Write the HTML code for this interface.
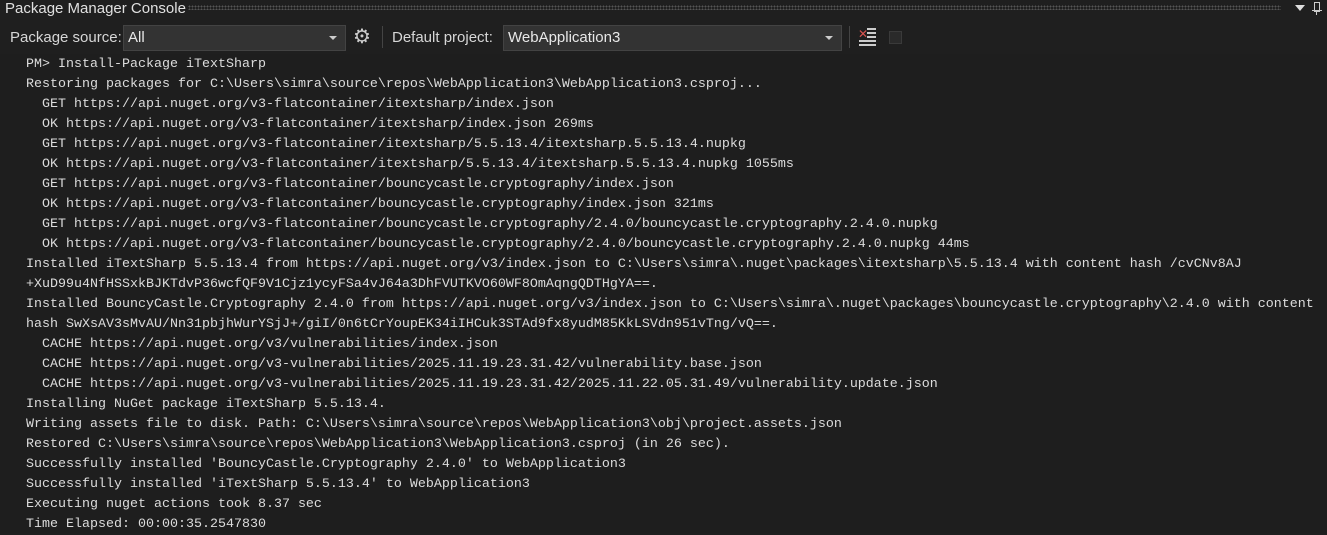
<!DOCTYPE html>
<html><head><style>
body{margin:0;width:1327px;height:533px;background:#1f1f1f;overflow:hidden;font-family:"Liberation Sans",sans-serif;color:#d6d6d6}
.title{position:absolute;left:0;top:0;width:1327px;height:20px}
.title span{position:absolute;left:5px;top:0px;font-size:15px;color:#e0e0e0}
.dots{position:absolute;left:188px;right:46px;top:5px;height:5px;background-image:radial-gradient(#555 0.8px,transparent 1px);background-size:3px 3px}
.tb{position:absolute;top:25px;height:26px;font-size:15px;line-height:26px}
.combo{position:absolute;top:25px;height:24px;background:#333333;border:1px solid #434343;font-size:15px;line-height:24px;padding-left:4px;color:#e8e8e8;box-sizing:content-box}
.arr{position:absolute;right:8px;top:10px;width:0;height:0;border-left:4px solid transparent;border-right:4px solid transparent;border-top:4px solid #ccc}
.console{position:absolute;left:0;top:54px;width:1327px;height:479px;background:#1e1e1e}
pre{margin:0;position:absolute;left:26px;top:1px;font-family:"Liberation Mono",monospace;font-size:13.33px;line-height:20px;color:#dcdcdc}
</style></head><body>
<div class="title"><span>Package Manager Console</span><div class="dots"></div>
<div style="position:absolute;left:1295px;top:5px;border-left:5px solid transparent;border-right:5px solid transparent;border-top:6px solid #ddd"></div>
<div style="position:absolute;left:1314px;top:2px;width:4px;height:8px;border:1px solid #ccc"></div>
<div style="position:absolute;left:1312px;top:10px;width:10px;height:1px;background:#ccc"></div>
<div style="position:absolute;left:1316px;top:11px;width:1px;height:4px;background:#ccc"></div>
</div>
<div class="tb" style="left:10px">Package source:</div>
<div class="combo" style="left:123px;width:217px">All<div class="arr"></div></div>
<div class="tb" style="left:353px;top:24px;font-size:20px;color:#ccc">⚙</div>
<div style="position:absolute;left:382px;top:26px;width:1px;height:22px;background:#444"></div>
<div class="tb" style="left:392px">Default project:</div>
<div class="combo" style="left:503px;width:333px">WebApplication3<div class="arr"></div></div>
<div style="position:absolute;left:849px;top:26px;width:1px;height:22px;background:#444"></div>
<div style="position:absolute;left:858px;top:28px;color:#d9534f;font-size:12px;line-height:12px">✕</div>
<div style="position:absolute;left:867px;top:28px;width:9px;height:2px;background:#ccc;box-shadow:0 4px 0 #ccc,0 8px 0 #ccc"></div>
<div style="position:absolute;left:859px;top:40px;width:17px;height:2px;background:#ccc;box-shadow:0 4px 0 #ccc"></div>
<div style="position:absolute;left:889px;top:31px;width:11px;height:11px;background:#2a2a2a;border:1px solid #3a3a3a"></div>
<div class="console"><pre>PM&gt; Install-Package iTextSharp
Restoring packages for C:\Users\simra\source\repos\WebApplication3\WebApplication3.csproj...
  GET https://api.nuget.org/v3-flatcontainer/itextsharp/index.json
  OK https://api.nuget.org/v3-flatcontainer/itextsharp/index.json 269ms
  GET https://api.nuget.org/v3-flatcontainer/itextsharp/5.5.13.4/itextsharp.5.5.13.4.nupkg
  OK https://api.nuget.org/v3-flatcontainer/itextsharp/5.5.13.4/itextsharp.5.5.13.4.nupkg 1055ms
  GET https://api.nuget.org/v3-flatcontainer/bouncycastle.cryptography/index.json
  OK https://api.nuget.org/v3-flatcontainer/bouncycastle.cryptography/index.json 321ms
  GET https://api.nuget.org/v3-flatcontainer/bouncycastle.cryptography/2.4.0/bouncycastle.cryptography.2.4.0.nupkg
  OK https://api.nuget.org/v3-flatcontainer/bouncycastle.cryptography/2.4.0/bouncycastle.cryptography.2.4.0.nupkg 44ms
Installed iTextSharp 5.5.13.4 from https://api.nuget.org/v3/index.json to C:\Users\simra\.nuget\packages\itextsharp\5.5.13.4 with content hash /cvCNv8AJ
+XuD99u4NfHSSxkBJKTdvP36wcfQF9V1Cjz1ycyFSa4vJ64a3DhFVUTKVO60WF8OmAqngQDTHgYA==.
Installed BouncyCastle.Cryptography 2.4.0 from https://api.nuget.org/v3/index.json to C:\Users\simra\.nuget\packages\bouncycastle.cryptography\2.4.0 with content
hash SwXsAV3sMvAU/Nn31pbjhWurYSjJ+/giI/0n6tCrYoupEK34iIHCuk3STAd9fx8yudM85KkLSVdn951vTng/vQ==.
  CACHE https://api.nuget.org/v3/vulnerabilities/index.json
  CACHE https://api.nuget.org/v3-vulnerabilities/2025.11.19.23.31.42/vulnerability.base.json
  CACHE https://api.nuget.org/v3-vulnerabilities/2025.11.19.23.31.42/2025.11.22.05.31.49/vulnerability.update.json
Installing NuGet package iTextSharp 5.5.13.4.
Writing assets file to disk. Path: C:\Users\simra\source\repos\WebApplication3\obj\project.assets.json
Restored C:\Users\simra\source\repos\WebApplication3\WebApplication3.csproj (in 26 sec).
Successfully installed 'BouncyCastle.Cryptography 2.4.0' to WebApplication3
Successfully installed 'iTextSharp 5.5.13.4' to WebApplication3
Executing nuget actions took 8.37 sec
Time Elapsed: 00:00:35.2547830</pre></div>
</body></html>
